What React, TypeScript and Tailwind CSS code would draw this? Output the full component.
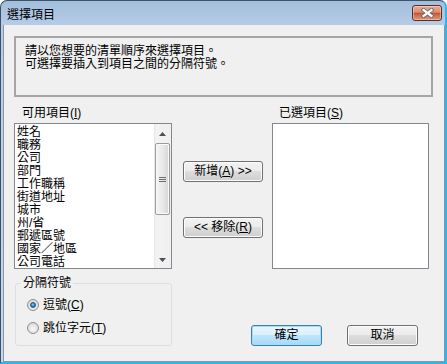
import React from "react";

function Mn({ c }: { c: string }) {
  return (
    <>
      (<span className="underline underline-offset-[1px]">{c}</span>)
    </>
  );
}

function Arrow({ up }: { up?: boolean }) {
  return (
    <svg width="7" height="4" viewBox="0 0 7 4">
      {up ? (
        <polygon points="0,4 7,4 3.5,0" fill="#505050" />
      ) : (
        <polygon points="0,0 7,0 3.5,4" fill="#505050" />
      )}
    </svg>
  );
}

function Scrollbar() {
  return (
    <div className="w-[17px] h-full flex flex-col bg-[linear-gradient(to_right,#e4e4e4,#f3f3f3_2px,#efefef)]">
      <div className="h-[17px] flex items-center justify-center pt-[3px]">
        <Arrow up />
      </div>
      <div className="mt-[2px] ml-px w-[15px] h-[72px] rounded-[2px] border border-[#9b9b9b] bg-[linear-gradient(to_right,#f4f4f4,#e9e9e9_50%,#d6d6d6)] shadow-[inset_0_0_0_1px_#fbfbfb] flex flex-col items-center justify-center gap-[1px]">
        <div className="w-[7px] h-px bg-[#6d6d6d]" />
        <div className="w-[7px] h-px bg-[#6d6d6d]" />
        <div className="w-[7px] h-px bg-[#6d6d6d]" />
      </div>
      <div className="flex-1" />
      <div className="h-[17px] flex items-center justify-center pt-[1px]">
        <Arrow />
      </div>
    </div>
  );
}

function Radio({ checked }: { checked?: boolean }) {
  return (
    <div className="w-[12px] h-[12px] rounded-full border border-[#8e8f8f] bg-[radial-gradient(circle_at_50%_60%,#f9f9f9,#dcdcdc_70%,#cfcfcf)] flex items-center justify-center">
      {checked ? (
        <div className="w-[6px] h-[6px] rounded-full border border-[#1d4f86] bg-[radial-gradient(circle_at_45%_40%,#8fd3f7,#2a7bc8_60%,#1a4f8c)]" />
      ) : null}
    </div>
  );
}

const btnGray =
  "h-[21px] rounded-[3px] border border-[#707070] bg-[linear-gradient(to_bottom,#f2f2f2_0%,#ebebeb_50%,#dddddd_50%,#cfcfcf_100%)] shadow-[inset_0_0_0_1px_#fcfcfc] flex items-center justify-center leading-[13px]";

export default function App() {
  const items = [
    "姓名",
    "職務",
    "公司",
    "部門",
    "工作職稱",
    "街道地址",
    "城市",
    "州/省",
    "郵遞區號",
    "國家／地區",
    "公司電話",
  ];
  return (
    <div className="w-[447px] h-[364px] font-['Liberation_Sans','Noto_Sans_CJK_TC',sans-serif] text-[12px] text-black">
      <div className="w-full h-full flex flex-col rounded-t-[7px] border-l border-t border-r-2 border-b-2 border-l-[#3e5064] border-t-[#3e5064] border-r-[#35b4e8] border-b-[#35b4e8] bg-[linear-gradient(to_bottom,#a2bedc,#b6cce6_24px,#c4d8ed)] overflow-hidden">
        {/* title bar */}
        <div className="h-[24px] shrink-0 flex items-start justify-between pl-[6px] pr-[3px]">
          <div className="pt-[8px] leading-[13px]">選擇項目</div>
          <div className="mt-[4px] w-[30px] h-[16px] rounded-[3px] border border-[#5b2f22] bg-[linear-gradient(to_bottom,#e8ab95_0%,#db8d70_45%,#bd4f2d_50%,#c9694a_62%,#de9577_100%)] shadow-[inset_0_0_0_1px_rgba(255,255,255,0.35)] flex items-center justify-center">
            <svg width="13" height="10" viewBox="0 0 13 10">
              <path d="M2.5 2 L10.5 8 M10.5 2 L2.5 8" stroke="#6a6a6a" strokeWidth="4" strokeLinecap="square" />
              <path d="M2.5 2 L10.5 8 M10.5 2 L2.5 8" stroke="#ffffff" strokeWidth="2.2" strokeLinecap="square" />
            </svg>
          </div>
        </div>
        {/* body */}
        <div className="flex-1 flex pl-[2px]">
          <div className="flex-1 bg-[#f0f0f0] border-l border-r border-b border-[#8796a8] pl-[10px] pt-[11px]">
            {/* header box */}
            <div className="w-[419px] h-[61px] border-2 border-[#a5a5a5] pl-[9px] pt-[7px] leading-[13px]">
              <div>請以您想要的清單順序來選擇項目。</div>
              <div>可選擇要插入到項目之間的分隔符號。</div>
            </div>
            {/* main row */}
            <div className="mt-[9px] flex items-start">
              <div className="w-[158px]">
                <div className="pl-[8px] h-[14px] leading-[14px]">
                  可用項目<Mn c="I" />
                </div>
                <div className="mt-[3px] h-[146px] border border-[#828790] bg-white flex">
                  <div className="flex-1 pl-[2px] pt-[2px] leading-[13px] overflow-hidden">
                    {items.map((t) => (
                      <div key={t} className="h-[13px] whitespace-nowrap">
                        {t}
                      </div>
                    ))}
                  </div>
                  <Scrollbar />
                </div>
              </div>
              <div className="ml-[11px] w-[80px] pt-[55px] flex flex-col">
                <div className={btnGray + " w-[80px]"}>
                  新增<Mn c="A" />
                  {" >>"}
                </div>
                <div className={btnGray + " w-[80px] mt-[35px]"}>
                  {"<< "}移除<Mn c="R" />
                </div>
              </div>
              <div className="ml-[9px] w-[157px]">
                <div className="pl-[7px] h-[14px] leading-[14px]">
                  已選項目<Mn c="S" />
                </div>
                <div className="mt-[3px] h-[146px] border border-[#828790] bg-white" />
              </div>
            </div>
            {/* bottom row */}
            <div className="mt-[7px] flex items-end">
              <fieldset className="ml-px w-[157px] border border-[#d5dfe5] rounded-[3px] px-[5px] pb-[10px]">
                <legend className="px-[2px] leading-[14px]">分隔符號</legend>
                <div className="mt-[8px] ml-[6px] h-[14px] flex items-center">
                  <Radio checked />
                  <span className="ml-[4px] leading-[14px]">
                    逗號<Mn c="C" />
                  </span>
                </div>
                <div className="mt-[9px] ml-[6px] h-[14px] flex items-center">
                  <Radio />
                  <span className="ml-[4px] leading-[14px]">
                    跳位字元<Mn c="T" />
                  </span>
                </div>
              </fieldset>
              <div className="ml-[79px] w-[71px] h-[21px] rounded-[3px] border border-[#3c7fb1] bg-[linear-gradient(to_bottom,#eaf6fd_0%,#d9f0fc_50%,#bee6fd_50%,#a7d9f5_100%)] shadow-[inset_0_0_0_1px_#9ee0fb] flex items-center justify-center leading-[13px]">
                確定
              </div>
              <div className={btnGray + " ml-[25px] w-[71px]"}>取消</div>
            </div>
          </div>
        </div>
      </div>
    </div>
  );
}
